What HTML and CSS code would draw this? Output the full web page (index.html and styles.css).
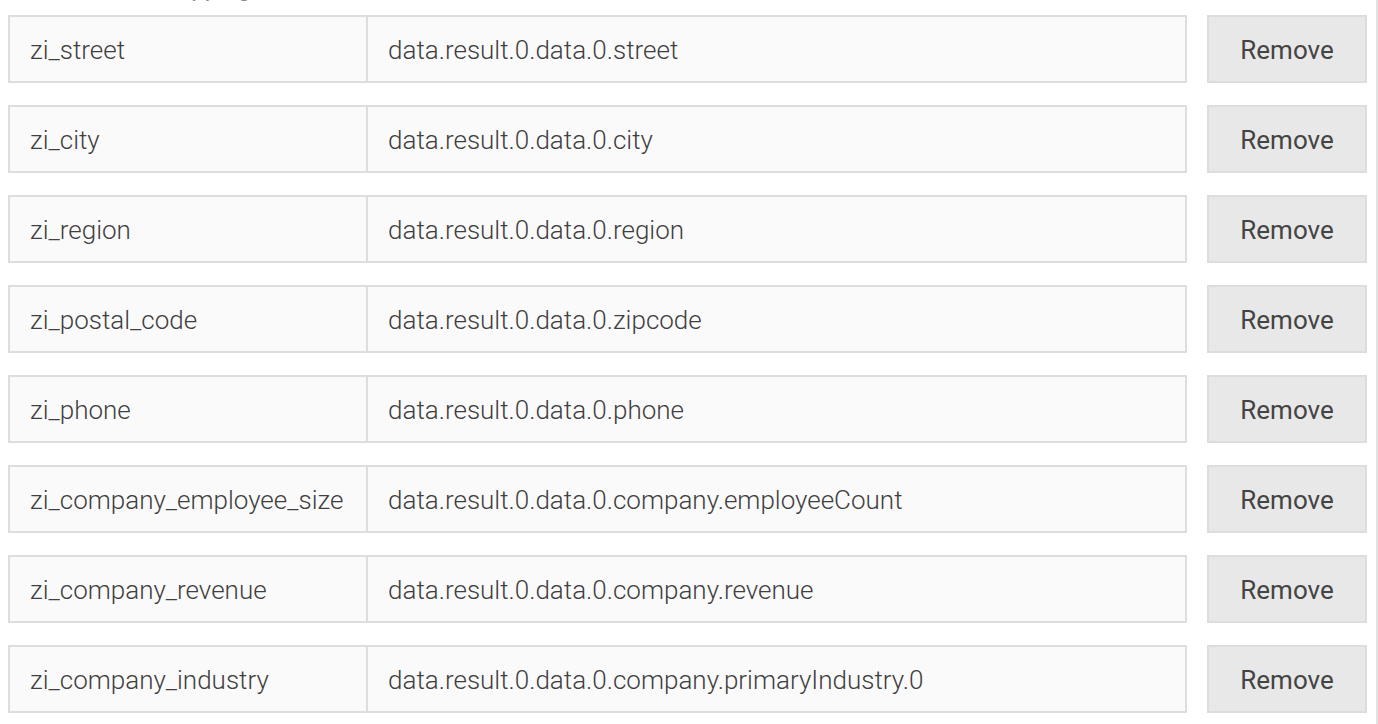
FILE: index.html
```html
<!DOCTYPE html>
<html>
<head>
<meta charset="utf-8">
<link rel="stylesheet" href="styles.css">
</head>
<body>
<div class="panel">
  <h2 class="heading">Field Mapping</h2>
  <div class="rows">
    <div class="row"><div class="group"><div class="field key">zi_street</div><div class="field val">data.result.0.data.0.street</div></div><button class="remove">Remove</button></div>
    <div class="row"><div class="group"><div class="field key">zi_city</div><div class="field val">data.result.0.data.0.city</div></div><button class="remove">Remove</button></div>
    <div class="row"><div class="group"><div class="field key">zi_region</div><div class="field val">data.result.0.data.0.region</div></div><button class="remove">Remove</button></div>
    <div class="row"><div class="group"><div class="field key">zi_postal_code</div><div class="field val">data.result.0.data.0.zipcode</div></div><button class="remove">Remove</button></div>
    <div class="row"><div class="group"><div class="field key">zi_phone</div><div class="field val">data.result.0.data.0.phone</div></div><button class="remove">Remove</button></div>
    <div class="row"><div class="group"><div class="field key">zi_company_employee_size</div><div class="field val">data.result.0.data.0.company.employeeCount</div></div><button class="remove">Remove</button></div>
    <div class="row"><div class="group"><div class="field key">zi_company_revenue</div><div class="field val">data.result.0.data.0.company.revenue</div></div><button class="remove">Remove</button></div>
    <div class="row"><div class="group"><div class="field key">zi_company_industry</div><div class="field val">data.result.0.data.0.company.primaryIndustry.0</div></div><button class="remove">Remove</button></div>
  </div>
</div>
</body>
</html>
```
FILE: styles.css
```css
html, body {
  margin: 0;
  padding: 0;
  background: #ffffff;
  overflow: hidden;
}
.panel {
  width: 1378px;
  height: 724px;
  box-sizing: border-box;
  padding: 0 9px 0 8px;
  border-right: 2px solid #e2e2e2;
  font-family: Roboto, "Liberation Sans", sans-serif;
  overflow: hidden;
}
.heading {
  margin: -24px 0 0 0;
  padding-left: 92px;
  height: 39px;
  font-size: 24px;
  line-height: 24px;
  font-weight: 400;
  color: #888;
}
.rows {
  display: flex;
  flex-direction: column;
  gap: 22px;
}
.row {
  display: flex;
  gap: 20px;
  height: 68px;
}
.group {
  flex: 1;
  display: flex;
}
.field {
  box-sizing: border-box;
  height: 68px;
  border: 2px solid #dddddd;
  background: #fafafa;
  padding: 2px 20px 0 20px;
  display: flex;
  align-items: center;
  font-size: 26px;
  font-weight: 300;
  color: #3f3f3f;
  white-space: nowrap;
}
.key {
  width: 360px;
  flex: none;
}
.val {
  flex: 1;
  margin-left: -2px;
}
.remove {
  width: 160px;
  height: 68px;
  box-sizing: border-box;
  border: 2px solid #dddddd;
  background: #e8e8e8;
  font-family: Roboto, "Liberation Sans", sans-serif;
  font-size: 26px;
  font-weight: 400;
  color: #444444;
  padding: 2px 0 0 0;
  border-radius: 0;
}
```
